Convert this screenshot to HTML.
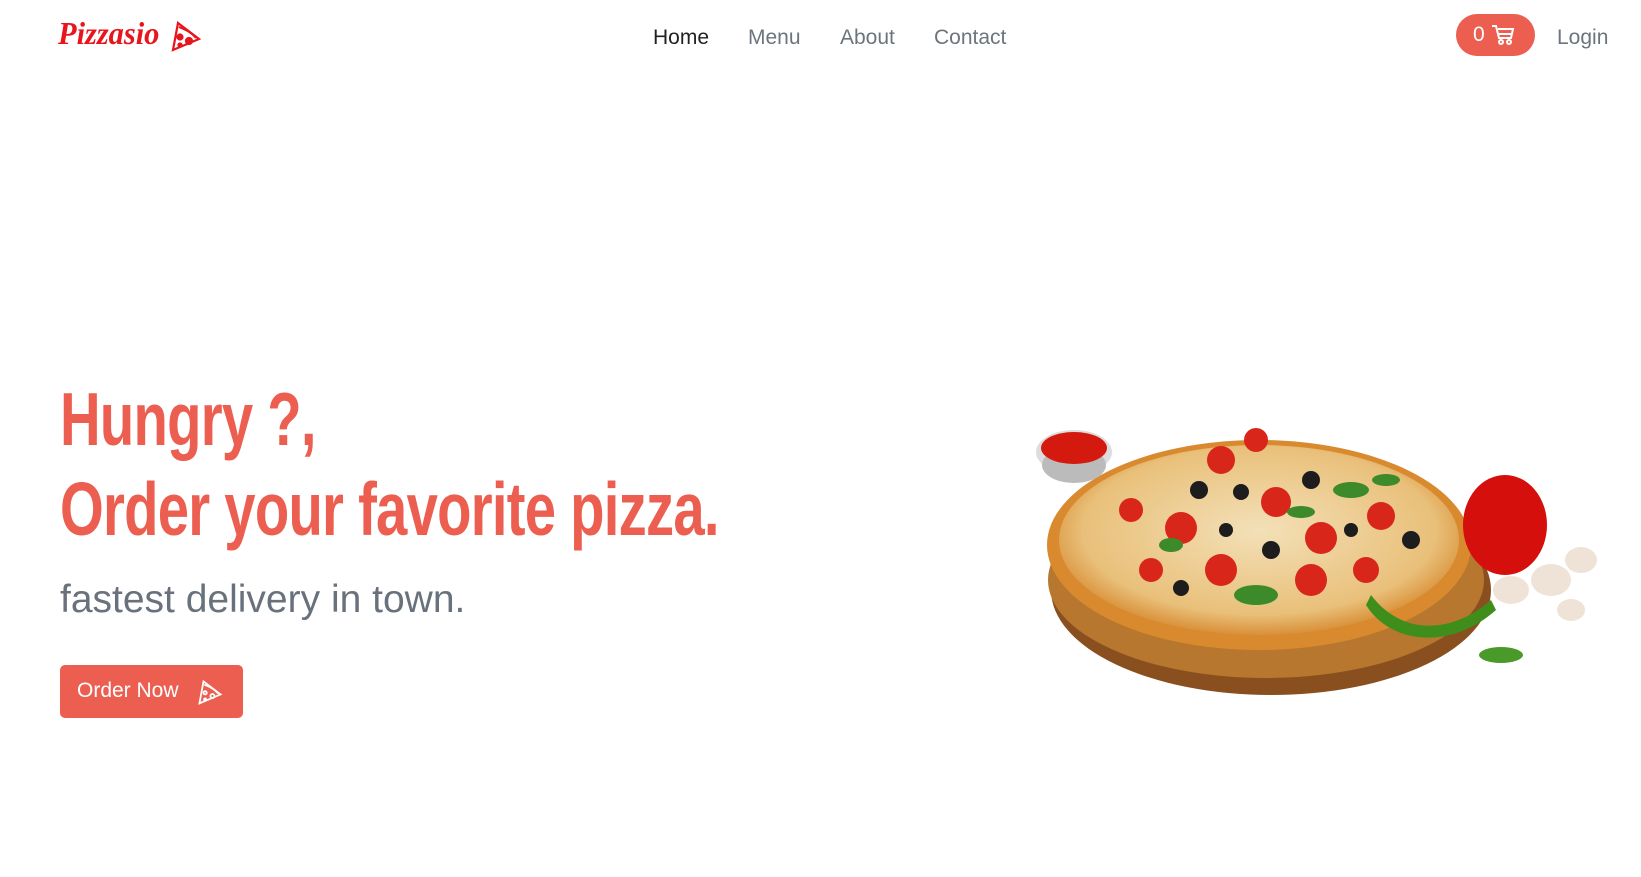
<!DOCTYPE html>
<html><head><meta charset="utf-8"><style>
*{margin:0;padding:0;box-sizing:border-box}
body{width:1641px;height:877px;background:#fff;font-family:"Liberation Sans",sans-serif;position:relative;overflow:hidden}
.abs{position:absolute}
.logo{left:58px;top:15px;font-family:"Liberation Serif",serif;font-style:italic;font-weight:bold;color:#e8151c;font-size:32px;letter-spacing:0px;transform:scaleX(0.95);transform-origin:left}
.nav a{position:absolute;top:26px;font-size:21px;color:#6c757d;text-decoration:none}
.cart{left:1456px;top:14px;width:79px;height:42px;border-radius:21px;background:#eb5e50;color:#fff;font-size:21px}
.h{left:60px;color:#eb5e50;font-weight:bold;font-size:75px;white-space:nowrap;transform:scaleX(0.75);transform-origin:left;letter-spacing:-1px}
.sub{left:60px;top:578px;font-size:39px;color:#69727c;white-space:nowrap}
.btn{left:60px;top:665px;width:183px;height:53px;background:#eb5e50;border-radius:5px;color:#fff;font-size:21px}
</style></head><body>
<div class="abs logo">Pizzasio</div>
<svg class="abs" style="left:170px;top:20px" width="32" height="32" viewBox="0 0 32 32" fill="none" stroke="#e8151c" stroke-width="2.2"><path d="M8 3 L29 19 L3 30 Z"/><path d="M9 7 C17 10 23 14 26 18"/><circle cx="10" cy="17" r="2.5" fill="#e8151c"/><circle cx="19" cy="21" r="3" fill="#e8151c"/><circle cx="10" cy="25" r="1.5" fill="#e8151c"/></svg>
<div class="nav">
<a style="left:653px;color:#222">Home</a>
<a style="left:748px">Menu</a>
<a style="left:840px">About</a>
<a style="left:934px">Contact</a>
<a style="left:1557px">Login</a>
</div>
<div class="abs cart"><span class="abs" style="left:17px;top:9px">0</span>
<svg class="abs" style="left:35px;top:10px" width="24" height="22" viewBox="0 0 24 22" fill="none" stroke="#fff" stroke-width="2"><path d="M1 2h4l3 12h12l2-9H7"/><path d="M8 10h13"/><circle cx="10" cy="18" r="2"/><circle cx="18" cy="18" r="2"/></svg></div>
<div class="abs h" style="top:376px">Hungry ?,</div>
<div class="abs h" style="top:466px">Order your favorite pizza.</div>
<div class="abs sub">fastest delivery in town.</div>
<div class="abs btn"><span class="abs" style="left:17px;top:14px">Order Now</span>
<svg class="abs" style="left:137px;top:14px" width="26" height="26" viewBox="0 0 32 32" fill="none" stroke="#fff" stroke-width="2.2"><path d="M8 3 L29 19 L3 30 Z"/><path d="M9 7 C17 10 23 14 26 18"/><circle cx="10" cy="17" r="2"/><circle cx="19" cy="21" r="2.5"/><circle cx="10" cy="25" r="1.2"/></svg></div>
<svg class="abs" style="left:1031px;top:420px" width="600" height="290" viewBox="0 0 600 290">
<defs><radialGradient id="ch" cx="50%" cy="45%" r="55%"><stop offset="0" stop-color="#f3e0b8"/><stop offset="0.8" stop-color="#e9c07a"/><stop offset="1" stop-color="#d99038"/></radialGradient></defs>
<ellipse cx="240" cy="170" rx="220" ry="105" fill="#8a4f1e"/>
<ellipse cx="235" cy="160" rx="218" ry="98" fill="#b7772f"/>
<ellipse cx="228" cy="125" rx="212" ry="105" fill="#d98a2f"/>
<ellipse cx="228" cy="120" rx="200" ry="95" fill="url(#ch)"/>
<ellipse cx="43" cy="32" rx="38" ry="22" fill="#ddd"/><ellipse cx="43" cy="45" rx="32" ry="18" fill="#bbb"/><ellipse cx="43" cy="28" rx="33" ry="16" fill="#d41a0f"/>
<g fill="#d9261b"><circle cx="150" cy="108" r="16"/><circle cx="245" cy="82" r="15"/><circle cx="290" cy="118" r="16"/><circle cx="190" cy="150" r="16"/><circle cx="280" cy="160" r="16"/><circle cx="350" cy="96" r="14"/><circle cx="335" cy="150" r="13"/><circle cx="120" cy="150" r="12"/><circle cx="225" cy="20" r="12"/><circle cx="190" cy="40" r="14"/><circle cx="100" cy="90" r="12"/></g>
<g fill="#1d1d1d"><circle cx="168" cy="70" r="9"/><circle cx="210" cy="72" r="8"/><circle cx="280" cy="60" r="9"/><circle cx="240" cy="130" r="9"/><circle cx="150" cy="168" r="8"/><circle cx="380" cy="120" r="9"/><circle cx="195" cy="110" r="7"/><circle cx="320" cy="110" r="7"/></g>
<g fill="#3c8a2a"><ellipse cx="225" cy="175" rx="22" ry="10"/><ellipse cx="320" cy="70" rx="18" ry="8"/><ellipse cx="140" cy="125" rx="12" ry="7"/><ellipse cx="270" cy="92" rx="14" ry="6"/><ellipse cx="355" cy="60" rx="14" ry="6"/></g>
<ellipse cx="474" cy="105" rx="42" ry="50" fill="#d50f0b"/>
<g fill="#eee3d6"><ellipse cx="480" cy="170" rx="18" ry="14"/><ellipse cx="520" cy="160" rx="20" ry="16"/><ellipse cx="550" cy="140" rx="16" ry="13"/><ellipse cx="540" cy="190" rx="14" ry="11"/></g>
<path d="M340 175 C370 215 420 215 460 180 L465 190 C420 230 360 225 335 185 Z" fill="#3f8e1c"/>
<ellipse cx="470" cy="235" rx="22" ry="8" fill="#4a9a2a"/>
</svg>
</body></html>
